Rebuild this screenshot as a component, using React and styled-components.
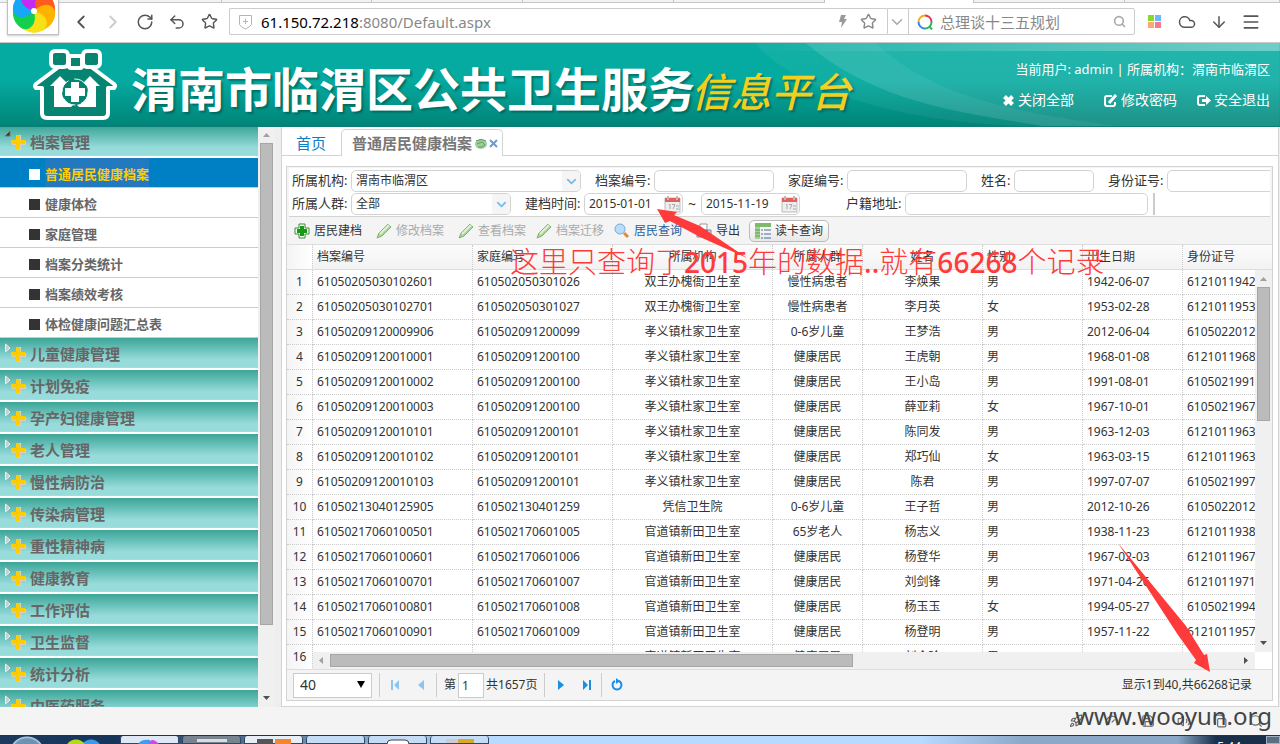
import React from 'react'
import styled, { createGlobalStyle } from 'styled-components';
import {
    ChevronLeft, ChevronRight, RotateCw, Undo2, Star, ChevronDown, Search, Cloud, ArrowDown, Menu,
    Rocket, Gauge, Save, Volume2, Copy, Zap
} from 'lucide-react';

const sections = [
    '儿童健康管理', '计划免疫', '孕产妇健康管理', '老人管理', '慢性病防治', '传染病管理',
    '重性精神病', '健康教育', '工作评估', '卫生监督', '统计分析', '中医药服务'
];

const archiveLinks = [
    '普通居民健康档案', '健康体检', '家庭管理', '档案分类统计', '档案绩效考核', '体检健康问题汇总表'
];

const columns = [
    { title: '档案编号', width: 160 },
    { title: '家庭编号', width: 140 },
    { title: '所属机构', width: 160, center: true },
    { title: '所属人群', width: 90, center: true },
    { title: '姓名', width: 120, center: true },
    { title: '性别', width: 100 },
    { title: '出生日期', width: 100 },
    { title: '身份证号', width: 160 }
];

const records = [
    ['61050205030102601', '610502050301026', '双王办槐衙卫生室', '慢性病患者', '李焕果', '男', '1942-06-07', '6121011942'],
    ['61050205030102701', '610502050301027', '双王办槐衙卫生室', '慢性病患者', '李月英', '女', '1953-02-28', '6121011953'],
    ['61050209120009906', '610502091200099', '孝义镇杜家卫生室', '0-6岁儿童', '王梦浩', '男', '2012-06-04', '6105022012'],
    ['61050209120010001', '610502091200100', '孝义镇杜家卫生室', '健康居民', '王虎朝', '男', '1968-01-08', '6121011968'],
    ['61050209120010002', '610502091200100', '孝义镇杜家卫生室', '健康居民', '王小岛', '男', '1991-08-01', '6105021991'],
    ['61050209120010003', '610502091200100', '孝义镇杜家卫生室', '健康居民', '薛亚莉', '女', '1967-10-01', '6105021967'],
    ['61050209120010101', '610502091200101', '孝义镇杜家卫生室', '健康居民', '陈同发', '男', '1963-12-03', '6121011963'],
    ['61050209120010102', '610502091200101', '孝义镇杜家卫生室', '健康居民', '郑巧仙', '女', '1963-03-15', '6121011963'],
    ['61050209120010103', '610502091200101', '孝义镇杜家卫生室', '健康居民', '陈君', '男', '1997-07-07', '6105021997'],
    ['61050213040125905', '610502130401259', '凭信卫生院', '0-6岁儿童', '王子哲', '男', '2012-10-26', '6105022012'],
    ['61050217060100501', '610502170601005', '官道镇新田卫生室', '65岁老人', '杨志义', '男', '1938-11-23', '6121011938'],
    ['61050217060100601', '610502170601006', '官道镇新田卫生室', '健康居民', '杨登华', '男', '1967-02-03', '6121011967'],
    ['61050217060100701', '610502170601007', '官道镇新田卫生室', '健康居民', '刘剑锋', '男', '1971-04-26', '6121011971'],
    ['61050217060100801', '610502170601008', '官道镇新田卫生室', '健康居民', '杨玉玉', '女', '1994-05-27', '6105021994'],
    ['61050217060100901', '610502170601009', '官道镇新田卫生室', '健康居民', '杨登明', '男', '1957-11-22', '6121011957'],
    ['61050217060101001', '610502170601010', '官道镇新田卫生室', '健康居民', '刘金玲', '男', '1960-03-12', '6121011960']
];

export default () =>
    <Page>
        <GlobalStyle />
        <Browser />
        <Banner />
        <Body>
            <Sidebar />
            <Workspace />
        </Body>
        <StatusBar>
            <Rocket size={14} />
            <Gauge size={14} />
            <Save size={14} />
            <Volume2 size={14} />
            <Copy size={14} />
            <Search size={14} />
            <Watermark>{'www.wooyun.org'}</Watermark>
        </StatusBar>
        <TaskBar />
        <Note>{'这里只查询了'}<b>2015</b>{'年的数据'}<b>..</b>{'就有'}<b>66268</b>{'个记录'}</Note>
        <Arrows viewBox='0 0 1280 744' aria-hidden='true'>
            <path d='M657 209L677 212L674 215L700 226L747 258L700 237L670 221L665 223Z' />
            <path d='M1118 543L1186 626L1204 655L1207 654L1210 672L1194 663L1196 660L1178 635Z' />
        </Arrows>
    </Page>

const Browser = () =>
    <Chrome>
        <TabStrip>
            <ChromeTab $width={222} />
            <ChromeTab $width={150} />
            <ChromeTab $width={151} />
            <ChromeTab $width={151} />
            <ChromeTab $width={151} />
            <ChromeTab $width={149} $active />
            <ChromeTab $width={151} />
            <ChromeTab />
        </TabStrip>
        <ChromeRow>
            <BrowserLogo>
                <svg width='44' height='46' viewBox='0 0 44 46'>
                    {['#ff5a1f', '#ffb300', '#f7e017', '#12d04c', '#16a8f5', '#c42bf0'].map((color, i) =>
                        <path
                            key={color}
                            d='M22 20C20 10 26 3 34 6C41 10 44 18 42 27C40 19 33 15 25 23Z'
                            fill={color}
                            stroke={color}
                            transform={`rotate(${i * 60} 22 23)`}
                        />
                    )}
                    <circle cx='22' cy='23' r='3' fill='#fff' />
                </svg>
            </BrowserLogo>
            <ChromeButton aria-label='后退'><ChevronLeft size={22} /></ChromeButton>
            <ChromeButton aria-label='前进' $faded><ChevronRight size={22} /></ChromeButton>
            <ChromeButton aria-label='刷新'><RotateCw size={18} /></ChromeButton>
            <ChromeButton aria-label='恢复'><Undo2 size={18} /></ChromeButton>
            <ChromeButton aria-label='收藏'><Star size={17} /></ChromeButton>
            <AddressBar>
                <svg width='13' height='16' viewBox='0 0 13 16' fill='none' stroke='#b5b5b5'>
                    <path d='M.5 1.500H12.500V10.500Q11 13 6.500 15Q2 13 .5 10.500ZM6.500 4.500V10M4 7.500H9' />
                </svg>
                <Url><b>61.150.72.218</b>:8080/Default.aspx</Url>
                <svg width='10' height='13' viewBox='0 0 10 13'>
                    <path d='M3 0H8L6 4H9L3 13L4 7H1Z' fill='#999' />
                </svg>
                <Star size={17} color='#888' />
            </AddressBar>
            <SearchBar>
                <EngineDrop aria-label='搜索引擎'><ChevronDown size={18} /></EngineDrop>
                <svg width='16' height='16' viewBox='0 0 16 16' fill='none' strokeWidth='2'>
                    <path d='M8 1.500A6.500 6.500 0 0 1 14.500 8' stroke='#e5325f' />
                    <path d='M14.500 8A6.500 6.500 0 0 1 8 14.500M12 12L15 15.500' stroke='#30b755' />
                    <path d='M8 14.500A6.500 6.500 0 0 1 1.500 8' stroke='#3388e8' />
                    <path d='M1.500 8A6.500 6.500 0 0 1 8 1.500' stroke='#f0ae20' />
                </svg>
                <SearchInput aria-label='搜索' defaultValue='总理谈十三五规划' />
                <Search size={13} strokeWidth={3} color='#aaa' />
            </SearchBar>
            <ChromeButton aria-label='应用'>
                <svg width='14' height='14' viewBox='0 0 14 14'>
                    <path d='M0 0H6V6H0Z' fill='#86d92c' />
                    <path d='M7 0H13V6H7Z' fill='#6ab8ff' />
                    <path d='M0 7H6V13H0Z' fill='#ffa678' />
                    <path d='M7 7H13V13H7Z' fill='#f37a88' />
                </svg>
            </ChromeButton>
            <ChromeButton aria-label='云'><Cloud size={18} /></ChromeButton>
            <ChromeButton aria-label='下载'><ArrowDown size={18} /></ChromeButton>
            <ChromeButton aria-label='菜单'><Menu size={20} /></ChromeButton>
        </ChromeRow>
    </Chrome>

const Banner = () =>
    <Header>
        <Swoosh viewBox='0 0 520 84' preserveAspectRatio='none' aria-hidden='true'>
            <path d='M0 0C40 50 160 84 280 84H520V0Z' fill='#fff' opacity='.05' />
            <path d='M50 0C120 60 200 70 285 84H360C250 70 170 50 120 0Z' fill='#fff' opacity='.12' />
            <path d='M120 0C170 50 250 70 360 84H520V0Z' fill='#fff' opacity='.07' />
            <path d='M0 0H520V8H0Z' fill='url(#edge)' />
            <defs>
                <linearGradient id='edge'>
                    <stop offset='0' stopColor='#fff' stopOpacity='0' />
                    <stop offset='1' stopColor='#fff' stopOpacity='.35' />
                </linearGradient>
            </defs>
        </Swoosh>
        <svg width='86' height='74' viewBox='0 0 86 74'>
            <g fill='#048471' stroke='#fff' strokeWidth='4' strokeLinejoin='round'>
                <path d='M27 18L3 36Q1 38 3 40H9V65Q9 70 14 70H70Q75 70 75 65V40H81Q83 38 81 36L57 18Z' />
                <rect x='18' y='3' width='17' height='16' rx='4' />
                <rect x='50' y='3' width='17' height='16' rx='4' />
                <rect x='36' y='8' width='13' height='12' rx='2' />
            </g>
            <path d='M21 59V38H17L27 28L42 43L57 28L67 38H63V59H46L42 55L38 59Z' fill='#fff' />
            <circle cx='42' cy='44' r='13' fill='#048471' stroke='#fff' strokeWidth='1' strokeDasharray='14 6' />
            <path d='M38 34H46V40H52V48H46V54H38V48H32V40H38Z' fill='#fff' />
        </svg>
        <Title>渭南市临渭区公共卫生服务<em>信息平台</em></Title>
        <UserPanel>
            <UserLine>当前用户: admin | 所属机构：渭南市临渭区</UserLine>
            <UserLinks>
                <a href='#close'>
                    <svg width='13' height='13' viewBox='0 0 13 13'>
                        <path d='M2.500 2.500L10.500 10.500M10.500 2.500L2.500 10.500' stroke='currentColor' strokeWidth='4' />
                    </svg>
                    关闭全部
                </a>
                <a href='#password'>
                    <svg width='14' height='13' viewBox='0 0 14 13' fill='none' stroke='currentColor' strokeWidth='2'>
                        <path d='M8 2H3Q1 2 1 4V10Q1 12 3 12H9Q11 12 11 10V8' />
                        <path d='M5 9L12 1' strokeWidth='3' />
                    </svg>
                    修改密码
                </a>
                <a href='#logout'>
                    <svg width='14' height='13' viewBox='0 0 14 13'>
                        <path d='M8 2H3Q1 2 1 4V9Q1 11 3 11H8' fill='none' stroke='currentColor' strokeWidth='2' />
                        <path d='M5 5H9V2L14 6.500L9 11V8H5Z' fill='currentColor' />
                    </svg>
                    安全退出
                </a>
            </UserLinks>
        </UserPanel>
    </Header>

const Plus = () =>
    <svg width='15' height='15' viewBox='0 0 15 15'>
        <path d='M6 0H10V6H15V10H10V15H6V10H1V6H6Z' fill='#d8d0c0' />
        <path d='M5 0H9V5H14V9H9V14H5V9H0V5H5Z' fill='#fc0' />
    </svg>

const Sidebar = () =>
    <Aside>
        <MenuList>
            <Section>
                <svg width='6' height='6' viewBox='0 0 6 6'><path d='M5 0V5H0Z' fill='#333' stroke='#777' /></svg>
                <Plus />
                档案管理
            </Section>
            {archiveLinks.map((name, i) =>
                <ArchiveLink href='#' key={name} $active={i === 0}>
                    <Square $active={i === 0} />
                    <span>{name}</span>
                </ArchiveLink>
            )}
            {sections.map(name =>
                <Section key={name}>
                    <svg width='6' height='10' viewBox='0 0 6 10'><path d='M.5 1L5 5L.5 9Z' fill='#ccc' stroke='#eee' /></svg>
                    <Plus />
                    {name}
                </Section>
            )}
        </MenuList>
        <VScroll $thumb={482} $rest={65} />
    </Aside>

const VScroll = ({ $thumb, $rest }) =>
    <ScrollTrack>
        <ScrollArrow viewBox='0 0 17 17'><path d='M5 11L8.500 7L12 11Z' fill='#a0a0a0' /></ScrollArrow>
        <Thumb $size={$thumb} />
        <Rest $size={$rest} />
        <ScrollArrow viewBox='0 0 17 17'><path d='M5 6L8.500 10L12 6Z' fill='#505050' /></ScrollArrow>
    </ScrollTrack>

const Pencil = () =>
    <svg width='16' height='16' viewBox='0 0 16 16'>
        <path d='M1 15L3 10L12 1L15 4L6 13Z' fill='#a6d695' stroke='#7fb570' />
        <path d='M4 11L13 2' stroke='#dff2d8' strokeWidth='2' />
    </svg>

const Calendar = () =>
    <svg width='17' height='18' viewBox='0 0 17 18'>
        <path d='M1 3H16V17H1Z' fill='#eee' stroke='#bbb' />
        <path d='M1 3H16V7H1Z' fill='#e4605a' />
        <path d='M4 1V5M13 1V5' stroke='#bbb' strokeWidth='2' />
        <path d='M5 10L6 9V14M8 9.500H11L9 14M12 11H15M12 14H15' fill='none' stroke='#aaa' />
    </svg>

const Combo = ({ id, label, width, value }) =>
    <Field>
        <Label htmlFor={id} $width={59}>{label}:</Label>
        <ComboBox $width={width}>
            <select id={id}><option>{value}</option></select>
            <i><ChevronDown size={15} strokeWidth={3} color='#77bdec' /></i>
        </ComboBox>
    </Field>

const TextField = ({ id, label, width, labelWidth = 59 }) =>
    <Field>
        <Label htmlFor={id} $width={labelWidth}>{label}:</Label>
        <Box id={id} $width={width} />
    </Field>

const Workspace = () =>
    <Main>
        <Tabs>
            <Tab>首页</Tab>
            <Tab $active>
                普通居民健康档案
                <svg width='26' height='14' viewBox='0 0 26 14'>
                    <ellipse cx='7' cy='8' rx='6' ry='5' fill='#9ccf9c' />
                    <path d='M2 5Q7 2 12 5M3 8L8 6L11 9M4 11Q8 12 11 9' stroke='#649c6a' fill='none' />
                    <path d='M16 4L23 11M23 4L16 11' stroke='#6d9bd0' strokeWidth='2' />
                </svg>
            </Tab>
        </Tabs>
        <Panel>
            <Filters>
                <FilterRow>
                    <Combo id='org' label='所属机构' width={230} value='渭南市临渭区' />
                    <TextField id='archive' label='档案编号' width={120} />
                    <TextField id='family' label='家庭编号' width={120} />
                    <TextField id='name' label='姓名' width={80} labelWidth={33} />
                    <TextField id='idcard' label='身份证号' width={160} />
                </FilterRow>
                <FilterRow>
                    <Combo id='group' label='所属人群' width={160} value='全部' />
                    <Field>
                        <Label htmlFor='from' $width={59}>建档时间:</Label>
                        <DateBox><input id='from' defaultValue='2015-01-01' /><Calendar /></DateBox>
                        <Tilde>~</Tilde>
                        <DateBox><input aria-label='结束时间' defaultValue='2015-11-19' /><Calendar /></DateBox>
                    </Field>
                    <AddressField>
                        <TextField id='address' label='户籍地址' width={243} />
                        <Divider />
                    </AddressField>
                </FilterRow>
            </Filters>
            <Toolbar>
                <Tool>
                    <svg width='16' height='16' viewBox='0 0 16 16'>
                        <path d='M5 1H11V5H15V11H11V15H5V11H1V5H5Z' fill='#fff' stroke='#398a35' />
                        <path d='M6 3H10V6H13V10H10V13H6V10H3V6H6Z' fill='#149a14' />
                    </svg>
                    居民建档
                </Tool>
                <Tool disabled><Pencil />修改档案</Tool>
                <Tool disabled><Pencil />查看档案</Tool>
                <Tool disabled><Pencil />档案迁移</Tool>
                <Tool $blue>
                    <svg width='16' height='16' viewBox='0 0 16 16'>
                        <path d='M10 10L14 14' stroke='#d98c3a' strokeWidth='3' />
                        <circle cx='6' cy='6' r='5' fill='#b8ddfa' stroke='#7da9d4' />
                    </svg>
                    居民查询
                </Tool>
                <Tool>
                    <svg width='16' height='16' viewBox='0 0 16 16'>
                        <path d='M4 1H11V7H4Z' fill='#fff' stroke='#999' />
                        <path d='M1 7H15V14H1Z' fill='#ccc' stroke='#888' />
                        <path d='M4 7H12V11H4Z' fill='#2f8be0' />
                    </svg>
                    导出
                </Tool>
                <Tool $raised>
                    <svg width='16' height='16' viewBox='0 0 16 16'>
                        <path d='M0 0H16V4H0Z' fill='#7dba6c' />
                        <path d='M0 4H5V16H0Z' fill='#a5d097' />
                        <path d='M6 7H16M6 11H16M6 15H16' stroke='#4a6a9a' strokeDasharray='2 1 9' />
                        <path d='M0 7H5M0 10H5M0 13H5' stroke='#5e9b50' />
                    </svg>
                    读卡查询
                </Tool>
            </Toolbar>
            <DataGrid>
                <Frozen>
                    <thead><tr><th aria-label='行号' /></tr></thead>
                    <tbody>{records.map((r, i) => <tr key={r[0]}><td>{i + 1}</td></tr>)}</tbody>
                </Frozen>
                <GridMain>
                    <GridHead>
                        <Table>
                            <Cols />
                            <thead>
                                <tr>{columns.map(c => <Th key={c.title} $center={c.center}>{c.title}</Th>)}</tr>
                            </thead>
                        </Table>
                    </GridHead>
                    <GridBody>
                        <Viewport>
                            <Table>
                                <Cols />
                                <tbody>
                                    {records.map(r =>
                                        <tr key={r[0]}>
                                            {r.map((text, i) => <Td key={i} $center={columns[i].center}>{text}</Td>)}
                                        </tr>
                                    )}
                                </tbody>
                            </Table>
                        </Viewport>
                        <VScroll $thumb={133} $rest={215} />
                    </GridBody>
                    <HScroll>
                        <ScrollArrow viewBox='0 0 17 17'><path d='M10 5L6 8.500L10 12Z' fill='#a0a0a0' /></ScrollArrow>
                        <Thumb $size={523} $flat />
                        <Rest $size={386} />
                        <ScrollArrow viewBox='0 0 17 17'><path d='M6 5L10 8.500L6 12Z' fill='#505050' /></ScrollArrow>
                    </HScroll>
                </GridMain>
            </DataGrid>
            <Pager>
                <PageSize>
                    <select aria-label='每页条数'><option>40</option></select>
                    <svg width='8' height='8' viewBox='0 0 8 8'><path d='M0 0H8L4 7Z' /></svg>
                </PageSize>
                <Separator />
                <PageButton aria-label='首页' disabled>
                    <svg viewBox='0 0 16 16'><path d='M4 3H6V13H4ZM12 3V13L7 8Z' /></svg>
                </PageButton>
                <PageButton aria-label='上一页' disabled>
                    <svg viewBox='0 0 16 16'><path d='M11 3V13L5 8Z' /></svg>
                </PageButton>
                <Separator />
                <PageNumber>
                    <label htmlFor='page'>第</label>
                    <input id='page' defaultValue='1' />
                    <span>共1657页</span>
                </PageNumber>
                <Separator />
                <PageButton aria-label='下一页'>
                    <svg viewBox='0 0 16 16'><path d='M6 3V13L12 8Z' /></svg>
                </PageButton>
                <PageButton aria-label='末页'>
                    <svg viewBox='0 0 16 16'><path d='M5 3V13L10 8ZM11 3H13V13H11Z' /></svg>
                </PageButton>
                <Separator />
                <PageButton aria-label='刷新'>
                    <svg viewBox='0 0 16 16'>
                        <path d='M10 4A4.500 4.500 0 1 1 6 4' fill='none' stroke='currentColor' strokeWidth='2' />
                        <path d='M7 1L11 4L7 7Z' />
                    </svg>
                </PageButton>
                <Total>显示1到40,共66268记录</Total>
            </Pager>
        </Panel>
    </Main>

const Cols = () =>
    <colgroup>{columns.map(c => <Col key={c.title} $width={c.width} />)}</colgroup>

const TaskBar = () =>
    <Tasks>
        <StartOrb />
        <Task $tone='#dfe8f5'>
            <svg width='24' height='6' viewBox='0 0 24 6'>
                <path d='M0 6Q2 0 12 1V6Z' fill='#3f9cf5' /><path d='M10 6Q13 -4 22 6Z' fill='#c94bee' />
            </svg>
        </Task>
        <Task $tone='#788492'>
            <svg width='30' height='3' viewBox='0 0 30 3'><path d='M0 0H30V3H0Z' fill='#ddd' /></svg>
        </Task>
        <Task $tone='#e8eef6'>
            <svg width='34' height='6' viewBox='0 0 34 6'>
                <path d='M0 0H16V6H0Z' fill='#555' /><path d='M18 0H34V6H18Z' fill='#f5852a' />
            </svg>
        </Task>
        <Task $tone='#c4dcf6' />
        <Task $tone='#c4dcf6'>
            <svg width='24' height='5' viewBox='0 0 24 5'><path d='M1 5Q1 1 5 1H19Q23 1 23 5' fill='#fff' stroke='#444' /></svg>
        </Task>
        <Task $tone='#c4dcf6'>
            <svg width='28' height='4' viewBox='0 0 28 4'><path d='M0 0H12V4H0Z' fill='#ccc' /><path d='M12 0H28V4H12Z' fill='#d9a928' /></svg>
        </Task>
        <Clock>5:44</Clock>
        <ShowDesktop aria-label='显示桌面' />
    </Tasks>

const GlobalStyle = createGlobalStyle`
    * { box-sizing: border-box; }
    body {
        margin: 0;
        overflow: hidden;
        background: #f4f4f4;
        color: #333;
        font: 12px/16px "Noto Sans", "Noto Sans CJK SC", sans-serif;
    }
    button, input, select { font: inherit; color: inherit; margin: 0; }
    svg { display: block; flex-shrink: 0; }
    a { color: inherit; text-decoration: none; }
`;

const Page = styled.div`
    position: relative;
    height: 100vh;
    display: flex;
    flex-direction: column;
    overflow: hidden;
`;

const Chrome = styled.header`
    background: #fff;
    border-bottom: 1px solid #c8c8c8;
`;

const TabStrip = styled.div`
    display: flex;
`;

const ChromeTab = styled.div`
    flex: ${p => p.$width ? `0 0 ${p.$width}px` : '1'};
    height: 3px;
    background: ${p => p.$active ? '#fff' : '#f2f2f2'};
    border-right: 1px solid #c4c4c4;
    border-bottom: ${p => p.$active ? '0' : '1px solid #c8c8c8'};
`;

const ChromeRow = styled.div`
    display: flex;
    align-items: center;
    gap: 8px;
    height: 39px;
    padding: 0 17px 2px 7px;
`;

const BrowserLogo = styled.div`
    width: 52px;
    height: 48px;
    margin: -22px 2px 0 0;
    padding: 0 4px;
    background: #fff;
    border: 1px solid #c0c0c0;
    box-shadow: 0 1px 2px #ccc;
`;

const ChromeButton = styled.button`
    width: 24px;
    height: 24px;
    flex-shrink: 0;
    display: grid;
    place-items: center;
    padding: 0;
    border: 0;
    background: none;
    color: ${p => p.$faded ? '#ccc' : '#555'};
`;

const AddressBar = styled.div`
    flex: 1;
    display: flex;
    align-items: center;
    gap: 12px;
    height: 27px;
    padding: 0 10px 0 9px;
    border: 1px solid #ccc;
    border-right: 0;
    border-radius: 2px 0 0 2px;
`;

const Url = styled.span`
    flex: 1;
    margin-left: -3px;
    color: #888;
    font-size: 15px;

    b {
        font-weight: 400;
        color: #000;
    }
`;

const SearchBar = styled.div`
    display: flex;
    align-items: center;
    width: 248px;
    height: 27px;
    margin-left: -8px;
    padding-right: 8px;
    border: 1px solid #ccc;
    border-radius: 0 2px 2px 0;
`;

const EngineDrop = styled.button`
    width: 21px;
    height: 25px;
    margin-right: 8px;
    padding: 0;
    border: 0;
    border-right: 1px solid #ccc;
    background: none;
    color: #aaa;
`;

const SearchInput = styled.input`
    flex: 1;
    min-width: 0;
    padding: 0 7px;
    border: 0;
    background: none;
    color: #888;
    font-size: 15px;
`;

const Header = styled.header`
    position: relative;
    display: flex;
    align-items: center;
    height: 84px;
    flex-shrink: 0;
    padding: 0 10px 0 33px;
    border-bottom: 1px solid #0b7f76;
    background: linear-gradient(#06aca0, #05aaa0 45%, #018478);
    color: #fff;
`;

const Swoosh = styled.svg`
    position: absolute;
    top: 0;
    right: 0;
    width: 41%;
    height: 100%;
`;

const Title = styled.h1`
    flex: 1;
    margin: 0 0 0 12px;
    padding-top: 8px;
    font: 700 47px/60px "Noto Sans CJK SC", sans-serif;
    text-shadow: 2px 2px 2px rgba(0, 80, 70, .6);
    white-space: nowrap;

    em {
        margin-left: -4px;
        font-size: 40px;
        font-weight: 500;
        color: #f2cf1d;
    }
`;

const UserPanel = styled.div`
    position: relative;
    display: flex;
    flex-direction: column;
    align-items: flex-end;
    gap: 13px;
    white-space: nowrap;
`;

const UserLine = styled.div`
    font-size: 13px;
    line-height: 18px;
`;

const UserLinks = styled.nav`
    display: flex;
    font-size: 14px;
    line-height: 18px;

    a {
        display: flex;
        align-items: center;
        gap: 3px;
    }
    a:nth-child(2) { margin: 0 20px 0 30px; }
`;

const Body = styled.div`
    flex: 1;
    min-height: 0;
    display: flex;
    gap: 6px;
    margin-top: -1px;
    padding-right: 1px;
    background: #eee;
`;

const Aside = styled.aside`
    width: 275px;
    flex-shrink: 0;
    display: flex;
`;

const MenuList = styled.nav`
    flex: 1;
    overflow: hidden;
    background: #fff;
`;

const Section = styled.div`
    display: flex;
    height: 30px;
    margin-bottom: 2px;
    padding-left: 5px;
    border-bottom: 1px solid #ccc;
    background: linear-gradient(#3ba598, #97dbda 75%);
    color: #666;
    font-size: 15px;
    font-weight: 700;
    line-height: 32px;

    svg:first-child { margin: 5px 0 0; }
    svg:nth-child(2) { margin: 9px 4px 0 0; }
`;

const ArchiveLink = styled.a`
    display: flex;
    gap: 5px;
    height: 30px;
    padding-left: 29px;
    border-bottom: 1px solid #ccc;
    background: ${p => p.$active ? '#0080c4' : '#fff'};
    color: ${p => p.$active ? '#fc0' : '#666'};
    font-size: 13px;
    font-weight: 700;
    line-height: 32px;

    span { background: ${p => p.$active ? '#2279bf' : 'none'}; }
`;

const Square = styled.i`
    width: 11px;
    height: 11px;
    margin-top: 11px;
    background: ${p => p.$active ? '#fff' : '#333'};
`;

const ScrollTrack = styled.div`
    width: 17px;
    flex-shrink: 0;
    display: flex;
    flex-direction: column;
    padding: 0 2px;
    background: #f0f0f0;
`;

const ScrollArrow = styled.svg`
    width: 17px;
    height: 17px;
    margin: 0 -2px;
`;

const Thumb = styled.div`
    flex: ${p => p.$size} 1 0;
    margin: ${p => p.$flat ? '2px 0' : '0'};
    background: #bbb;
    border: 1px solid #a6a6a6;
`;

const Rest = styled.div`
    flex: ${p => p.$size} 1 0;
`;

const Main = styled.main`
    flex: 1;
    min-width: 0;
    display: flex;
    flex-direction: column;
    background: #fff;
    border: 1px solid #d3d3d3;
    border-top: 0;
`;

const Tabs = styled.div`
    display: flex;
    align-items: flex-end;
    height: 30px;
    flex-shrink: 0;
    box-shadow: inset 0 -1px #d3d3d3;
`;

const Tab = styled.button`
    display: flex;
    align-items: center;
    gap: 2px;
    height: 27px;
    padding: ${p => p.$active ? '0 2px 0 10px' : '0 15px 0 14px'};
    border: ${p => p.$active ? '1px solid #d3d3d3' : '0'};
    border-bottom: 0;
    border-radius: 5px 5px 0 0;
    background: ${p => p.$active ? '#fff' : 'none'};
    color: ${p => p.$active ? '#777' : '#0b7ec8'};
    font-size: 15px;
    font-weight: ${p => p.$active ? 700 : 400};
    white-space: nowrap;
`;

const Panel = styled.section`
    flex: 1;
    min-height: 0;
    display: flex;
    flex-direction: column;
    margin: 10px 5px 5px 4px;
    border: 1px solid #d3d3d3;
    background: #f4f4f4;
`;

const Filters = styled.form`
    display: flex;
    flex-direction: column;
    gap: 1px;
    flex-shrink: 0;
    margin: 1px 2px 0;
    padding: 2px 3px 1px;
    overflow: hidden;
    border-bottom: 1px solid #d3d3d3;
    background: #fff;
`;

const FilterRow = styled.div`
    display: flex;
    gap: 14px;
`;

const Field = styled.div`
    display: flex;
    align-items: center;
    flex-shrink: 0;
`;

const AddressField = styled.div`
    display: flex;
    gap: 5px;
    margin-left: 32px;
`;

const Label = styled.label`
    width: ${p => p.$width}px;
    padding-bottom: 2px;
    font-size: 13px;
    white-space: nowrap;
`;

const Box = styled.input`
    width: ${p => p.$width}px;
    height: 22px;
    border: 1px solid #d3d3d3;
    border-radius: 5px;
    background: #fff;
`;

const ComboBox = styled.div`
    display: flex;
    width: ${p => p.$width}px;
    height: 22px;
    overflow: hidden;
    border: 1px solid #d3d3d3;
    border-radius: 5px;

    select {
        appearance: none;
        flex: 1;
        padding: 0 4px;
        border: 0;
        background: none;
    }
    i {
        display: grid;
        place-items: center;
        width: 18px;
        background: #f5f5f5;
    }
`;

const DateBox = styled.div`
    display: flex;
    align-items: center;
    width: 99px;
    height: 22px;
    padding-right: 1px;
    border: 1px solid #d3d3d3;
    border-radius: 5px;

    input {
        flex: 1;
        min-width: 0;
        padding: 0 4px;
        border: 0;
        background: none;
    }
`;

const Tilde = styled.span`
    width: 18px;
    text-align: center;
    font-size: 14px;
`;

const Divider = styled.i`
    width: 2px;
    background: #ccc;
`;

const Toolbar = styled.div`
    display: flex;
    align-items: center;
    gap: 14px;
    height: 27px;
    flex-shrink: 0;
    padding-left: 7px;
`;

const Tool = styled.button`
    display: flex;
    align-items: center;
    gap: 4px;
    height: 22px;
    margin-left: ${p => p.$raised ? '-5px' : '0'};
    padding: ${p => p.$raised ? '0 5px' : '0'};
    border: ${p => p.$raised ? '1px solid #bbb' : '0'};
    border-radius: 5px;
    background: ${p => p.$raised ? 'linear-gradient(#fff, #e8e8e8)' : 'none'};
    color: ${p => p.$blue ? '#2a5f9e' : '#333'};
    white-space: nowrap;

    &:disabled { color: #aaa; }
    &:nth-child(4), &:nth-child(5) { margin-left: -4px; }
`;

const DataGrid = styled.div`
    flex: 1;
    min-height: 0;
    display: flex;
    align-items: stretch;
    overflow: hidden;
    border-top: 1px solid #ddd;
    border-bottom: 1px solid #ddd;
    background: #fff;
`;

const Table = styled.table`
    width: 1030px;
    table-layout: fixed;
    border-spacing: 0;
`;

const Frozen = styled.table`
    width: 26px;
    height: 0;
    flex-shrink: 0;
    table-layout: fixed;
    border-spacing: 0;

    th, td {
        height: 25px;
        padding: 0;
        border-right: 1px dotted #ccc;
        border-bottom: 1px dotted #ccc;
        background: linear-gradient(90deg, #f4f4f4, #fff);
        text-align: center;
    }
    th { border-bottom: 1px solid #ddd; }
`;

const GridMain = styled.div`
    flex: 1;
    min-width: 0;
    display: flex;
    flex-direction: column;
`;

const GridHead = styled.div`
    flex-shrink: 0;
    overflow: hidden;
    border-bottom: 1px solid #ddd;
    background: linear-gradient(#fcfcfc, #f2f2f2);
`;

const GridBody = styled.div`
    flex: 1;
    min-height: 0;
    display: flex;
`;

const Viewport = styled.div`
    flex: 1;
    min-width: 0;
    overflow: hidden;
`;

const Col = styled.col`
    width: ${p => p.$width}px;
`;

const Th = styled.th`
    height: 24px;
    padding: 0 4px;
    border-right: 1px dotted #ccc;
    font-weight: 400;
    text-align: ${p => p.$center ? 'center' : 'left'};
`;

const Td = styled.td`
    height: 25px;
    padding: 0 4px;
    border-right: 1px dotted #ccc;
    border-bottom: 1px dotted #ccc;
    text-align: ${p => p.$center ? 'center' : 'left'};
    white-space: nowrap;
`;

const HScroll = styled.div`
    display: flex;
    height: 17px;
    flex-shrink: 0;
    margin-right: 17px;
    background: #f0f0f0;

    svg { margin: 0; }
`;

const Pager = styled.div`
    display: flex;
    align-items: center;
    gap: 7px;
    height: 30px;
    flex-shrink: 0;
    padding: 0 20px 0 6px;
`;

const PageSize = styled.div`
    display: flex;
    align-items: center;
    width: 79px;
    height: 25px;
    padding-right: 6px;
    border: 1px solid #ccc;
    background: #fff;
    font-size: 14px;

    select {
        appearance: none;
        flex: 1;
        padding: 0 6px;
        border: 0;
        background: none;
    }
`;

const Separator = styled.i`
    width: 1px;
    height: 24px;
    background: #ccc;
`;

const PageButton = styled.button`
    width: 16px;
    height: 16px;
    padding: 0;
    border: 0;
    background: none;
    color: #1a8fe3;

    svg { fill: currentColor; }
    &:disabled { color: #8cc5ef; }
    & + & { margin-left: 3px; }
`;

const PageNumber = styled.div`
    display: flex;
    align-items: center;
    gap: 2px;

    input {
        width: 26px;
        height: 25px;
        padding: 0 3px;
        border: 1px solid #ccc;
        background: #fff;
    }
`;

const Total = styled.span`
    margin-left: auto;
`;

const StatusBar = styled.footer`
    position: relative;
    display: flex;
    align-items: center;
    justify-content: flex-end;
    gap: 22px;
    height: 28px;
    flex-shrink: 0;
    padding-right: 17px;
    color: #666;
`;

const Watermark = styled.span`
    position: absolute;
    right: 8px;
    top: -6px;
    color: #444;
    font-size: 24px;
    line-height: 30px;
`;

const Tasks = styled.footer`
    display: flex;
    gap: 3px;
    height: 9px;
    flex-shrink: 0;
    overflow: hidden;
    border-top: 1px solid #26323f;
    background: linear-gradient(90deg, #1c3a5e, #17345a 9%, #b8daff 38%, #b8daff 72%, #8ba8c8 80%, #8ba8c8 92%, #1a2f4a 95%);
`;

const StartOrb = styled.div`
    width: 117px;
    flex-shrink: 0;
    background:
        radial-gradient(circle at 76px 14px, #b5d916 10px, transparent 11px),
        radial-gradient(circle at 91px 14px, #3a9be8 10px, transparent 11px),
        radial-gradient(circle at 27px 18px, #6b93b5 15px, #b9cddd 17px, transparent 18px);
`;

const Task = styled.div`
    display: flex;
    justify-content: center;
    width: 59px;
    padding-top: 3px;
    border: 1px solid #33485f;
    border-top: 0;
    border-radius: 3px 3px 0 0;
    background: ${p => p.$tone};
`;

const Clock = styled.time`
    margin: 3px 22px 0 auto;
    color: #fff;
    font-size: 12px;
    line-height: 16px;
`;

const ShowDesktop = styled.button`
    width: 14px;
    padding: 0;
    border: 1px solid #9fb0c0;
    background: #5b6f84;
`;

const Note = styled.div`
    position: absolute;
    left: 510px;
    top: 242px;
    color: #ff3a3a;
    font: 300 29px/36px "Noto Sans CJK SC", sans-serif;
    white-space: nowrap;

    b {
        font: 500 28px/36px "Noto Sans", sans-serif;
    }
`;

const Arrows = styled.svg`
    position: absolute;
    inset: 0;
    width: 100%;
    height: 100%;
    fill: #ff3a3a;
    pointer-events: none;
`;
